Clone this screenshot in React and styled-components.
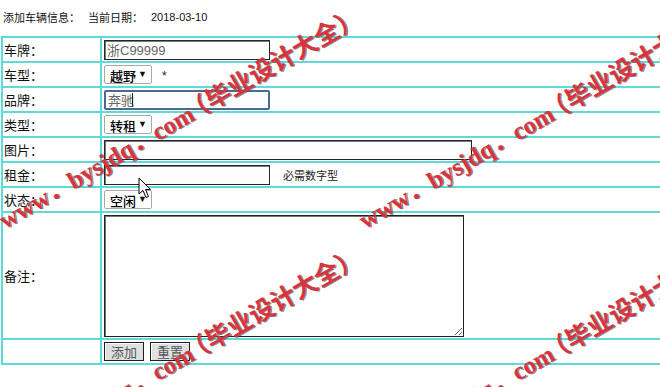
import React from "react";
import styled, { createGlobalStyle } from "styled-components";

const CYAN = "#5fdada";

const GlobalStyle = createGlobalStyle`
  html, body {
    margin: 0;
    padding: 0;
    background: #fff;
    overflow: hidden;
  }
  body {
    font-family: "Liberation Sans", "Noto Sans CJK SC", sans-serif;
    color: #111;
  }
`;

const Page = styled.div`
  position: relative;
  width: 660px;
  height: 387px;
  overflow: hidden;
`;

const Header = styled.div`
  box-sizing: border-box;
  height: 36px;
  padding: 0 0 2px 3px;
  display: flex;
  align-items: center;
  gap: 8px;
  font-size: 11px;
  font-family: "Noto Sans CJK SC", sans-serif;
  color: #111;
  span.date {
    font-family: "Liberation Sans", sans-serif;
  }
`;

const FormGrid = styled.div`
  display: grid;
  grid-template-columns: 99px 720px;
  grid-template-rows: repeat(7, 25px) 127px 25px;
  margin-left: 1px;
  width: max-content;
  border: 1px solid ${CYAN};
`;

const Cell = styled.div`
  box-sizing: border-box;
  border: 1px solid ${CYAN};
  display: flex;
  align-items: ${(p) => (p.$top ? "flex-start" : "center")};
  padding-top: ${(p) => (p.$top ? "2px" : "0")};
  min-width: 0;
`;

const LabelCell = styled(Cell)`
  padding-left: 1px;
  font-size: 13px;
  font-family: "Noto Sans CJK SC", sans-serif;
  color: #111;
`;

const ValueCell = styled(Cell)`
  padding-left: 2px;
`;

const TextInput = styled.input`
  box-sizing: border-box;
  width: ${(p) => p.$w}px;
  height: 20px;
  margin: 0;
  padding: 0 2px;
  font-size: 13px;
  font-family: "Liberation Sans", "Noto Sans CJK SC", sans-serif;
  color: #666;
  background: #fdfdfd;
  border: ${(p) => (p.$focus ? "2px solid #4a6b90" : "1px solid #262626")};
  border-radius: ${(p) => (p.$focus ? "2px" : "0")};
  box-shadow: ${(p) => (p.$focus ? "none" : "inset 1px 1px 0 #7a7a7a")};
  outline: none;
`;

const InputWrap = styled.span`
  position: relative;
  display: inline-flex;
`;

const Caret = styled.span`
  position: absolute;
  left: 28px;
  top: 3px;
  width: 1px;
  height: 14px;
  background: #222;
`;

const SelectWrap = styled.span`
  position: relative;
  display: inline-flex;
`;

const Select = styled.select`
  box-sizing: border-box;
  appearance: none;
  width: 48px;
  height: 19px;
  margin: 0;
  padding: 0 0 0 5px;
  font-size: 13px;
  font-weight: 500;
  font-family: "Noto Sans CJK SC", sans-serif;
  color: #000;
  background: #fff;
  border: 1px solid #a9a9a9;
  border-radius: 2px;
  outline: none;
`;

const Arrow = styled.span`
  position: absolute;
  right: 5px;
  top: 3px;
  font-size: 9px;
  line-height: 12px;
  color: #111;
  pointer-events: none;
`;

const Star = styled.span`
  margin-left: ${(p) => p.$gap}px;
  font-size: 12px;
  font-family: "Liberation Sans", sans-serif;
  color: #222;
  padding-top: 2px;
`;

const Hint = styled.span`
  margin-left: 13px;
  font-size: 11px;
  font-family: "Noto Sans CJK SC", sans-serif;
  color: #222;
`;

const Remark = styled.textarea`
  box-sizing: border-box;
  width: 360px;
  height: 122px;
  margin: 0;
  border: 1px solid #222;
  box-shadow: inset 1px 1px 0 #777;
  resize: both;
  outline: none;
`;

const Buttons = styled.div`
  display: flex;
  gap: 6px;
`;

const Button = styled.button`
  box-sizing: border-box;
  height: 19px;
  padding: 0 6px;
  margin: 0;
  font-size: 13px;
  line-height: 15px;
  font-family: "Noto Sans CJK SC", sans-serif;
  color: #555;
  background: #e0e0e0;
  border: 1px solid #1e1e1e;
  box-shadow: inset 1px 1px 0 #fafafa;
`;

const Overlay = styled.div`
  position: absolute;
  inset: 0;
  pointer-events: none;
`;

const Watermark = styled.span`
  position: absolute;
  left: ${(p) => p.$x}px;
  top: ${(p) => p.$y}px;
  white-space: nowrap;
  font-family: "Liberation Serif", "Noto Sans CJK SC", serif;
  font-weight: bold;
  font-size: 25px;
  line-height: 25px;
  color: #d8343d;
  text-shadow: 1px 1px 0 rgba(70, 70, 70, 0.65);
  transform-origin: 0 100%;
  transform: rotate(-30deg);
`;

const Paren = styled.span`
  margin-left: -7px;
`;

const Pointer = styled.svg`
  position: absolute;
  left: 138px;
  top: 177px;
`;

const Sel = ({ value }) => (
  <SelectWrap>
    <Select defaultValue={value}>
      <option>{value}</option>
    </Select>
    <Arrow>▼</Arrow>
  </SelectWrap>
);

const Mark = ({ x, y }) => (
  <Watermark $x={x} $y={y}>
    www．bysjdq．com<Paren>（</Paren>毕业设计大全）
  </Watermark>
);

export default function App() {
  return (
    <Page>
      <GlobalStyle />
      <Header>
        <span>添加车辆信息：</span>
        <span>当前日期：</span>
        <span className="date">2018-03-10</span>
      </Header>
      <FormGrid>
        <LabelCell>车牌：</LabelCell>
        <ValueCell>
          <TextInput $w={166} defaultValue="浙C99999" readOnly />
          <Star $gap={11}>*</Star>
        </ValueCell>

        <LabelCell>车型：</LabelCell>
        <ValueCell>
          <Sel value="越野" />
          <Star $gap={10}>*</Star>
        </ValueCell>

        <LabelCell>品牌：</LabelCell>
        <ValueCell>
          <InputWrap>
            <TextInput $w={166} $focus defaultValue="奔驰" />
            <Caret />
          </InputWrap>
        </ValueCell>

        <LabelCell>类型：</LabelCell>
        <ValueCell>
          <Sel value="转租" />
        </ValueCell>

        <LabelCell>图片：</LabelCell>
        <ValueCell>
          <TextInput $w={368} />
        </ValueCell>

        <LabelCell>租金：</LabelCell>
        <ValueCell>
          <TextInput $w={166} />
          <Hint>必需数字型</Hint>
        </ValueCell>

        <LabelCell>状态：</LabelCell>
        <ValueCell>
          <Sel value="空闲" />
        </ValueCell>

        <LabelCell>备注：</LabelCell>
        <ValueCell $top>
          <Remark />
        </ValueCell>

        <LabelCell />
        <ValueCell>
          <Buttons>
            <Button>添加</Button>
            <Button>重置</Button>
          </Buttons>
        </ValueCell>
      </FormGrid>

      <Overlay>
        <Mark x={7} y={208} />
        <Mark x={367} y={208} />
        <Mark x={7} y={448} />
        <Mark x={367} y={448} />
        <Pointer width="14" height="22" viewBox="0 0 14 22">
          <path
            d="M1 1 L1 17 L5 13.5 L8 20.5 L10.5 19.5 L7.5 12.5 L12.5 12.5 Z"
            fill="#fff"
            stroke="#000"
            strokeWidth="1"
            strokeLinejoin="round"
          />
        </Pointer>
      </Overlay>
    </Page>
  );
}
